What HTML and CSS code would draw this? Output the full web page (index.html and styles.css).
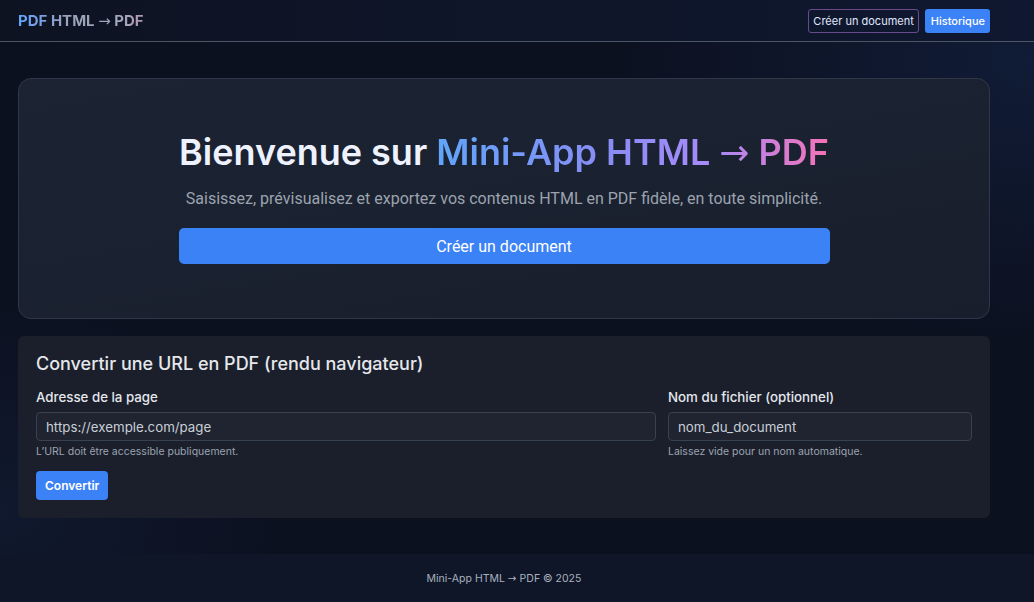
FILE: index.html
```html
<!DOCTYPE html>
<html lang="fr">
<head>
<meta charset="utf-8">
<title>Mini-App HTML → PDF</title>
<link rel="stylesheet" href="styles.css">
</head>
<body>
<header class="topbar">
  <div class="container topbar-inner">
    <a class="brand" href="#">PDF HTML <span class="arr">→</span> PDF</a>
    <nav class="nav">
      <a class="btn-outline" href="#">Créer un document</a>
      <a class="btn-small" href="#">Historique</a>
    </nav>
  </div>
</header>
<main class="container main">
  <section class="hero">
    <div class="hero-inner">
      <h1 class="hero-title">Bienvenue sur <span class="grad">Mini-App HTML <span class="arr">→</span> PDF</span></h1>
      <p class="hero-sub">Saisissez, prévisualisez et exportez vos contenus HTML en PDF fidèle, en toute simplicité.</p>
      <a class="btn-big" href="#">Créer un document</a>
    </div>
  </section>
  <section class="card">
    <h2 class="card-title">Convertir une URL en PDF (rendu navigateur)</h2>
    <div class="form-grid">
      <div class="field">
        <label class="label">Adresse de la page</label>
        <div class="input">https://exemple.com/page</div>
        <div class="help">L’URL doit être accessible publiquement.</div>
      </div>
      <div class="field">
        <label class="label">Nom du fichier (optionnel)</label>
        <div class="input">nom_du_document</div>
        <div class="help">Laissez vide pour un nom automatique.</div>
      </div>
    </div>
    <button class="btn-convert">Convertir</button>
  </section>
</main>
<footer class="footer">
  <div class="container footer-inner"><p class="footer-text">Mini-App HTML <span class="arr">→</span> PDF © 2025</p></div>
</footer>
</body>
</html>
```
FILE: styles.css
```css
* { box-sizing: border-box; }
html, body { margin: 0; padding: 0; }
body {
  font-family: Inter, "Liberation Sans", sans-serif;
  color: #e5e7eb;
  background:
    radial-gradient(ellipse 600px 400px at 100% 10%, rgba(20, 36, 72, 0.55), transparent 70%),
    radial-gradient(ellipse 400px 300px at 0% 85%, rgba(20, 32, 60, 0.5), transparent 70%),
    #0c1120;
  min-height: 602px;
  display: flex;
  flex-direction: column;
}
.container { width: 972px; margin-left: 18px; }
.arr { font-family: "DejaVu Sans", sans-serif; font-weight: 400; }
.topbar {
  border-bottom: 1px solid #4b5563;
  background: linear-gradient(90deg, #0e1322 0%, #0f1830 100%);
}
.topbar-inner {
  height: 41px;
  display: flex;
  align-items: center;
  justify-content: space-between;
}
.brand {
  font-size: 15px;
  font-weight: 700;
  text-decoration: none;
  background: linear-gradient(90deg, #60a5fa 0%, #7d9ee0 20%, #9aa3b8 40%, #a3a8bb 80%, #b197ad 100%);
  -webkit-background-clip: text;
  background-clip: text;
  color: transparent;
}
.nav { display: flex; gap: 6px; align-items: center; }
.btn-outline {
  font-size: 11px;
  color: #e0e7ff;
  text-decoration: none;
  border: 1px solid #6b4a8c;
  border-radius: 3px;
  height: 24px;
  padding: 0 4px;
  display: flex;
  align-items: center;
}
.btn-small {
  font-size: 11px;
  color: #fff;
  font-weight: 500;
  text-decoration: none;
  background: #3b82f6;
  border-radius: 3px;
  height: 24px;
  padding: 0 5px 0 6px;
  display: flex;
  align-items: center;
}
.main { padding-top: 36px; padding-bottom: 36px; flex: 1; }
.hero {
  border: 1px solid #2f3748;
  border-radius: 13px;
  background: linear-gradient(170deg, #1c2434 0%, #181e2b 100%);
  padding: 51px 0 54px;
  display: flex;
  justify-content: center;
}
.hero-inner { width: 651px; text-align: center; }
.hero-title {
  margin: 0;
  font-size: 36px;
  font-weight: 600;
  line-height: 44px;
  color: #eef2ff;
  white-space: nowrap;
  letter-spacing: 0;
}
.grad {
  background: linear-gradient(90deg, #60a5fa 0%, #8b8cf6 45%, #a78bfa 70%, #f472b6 100%);
  -webkit-background-clip: text;
  background-clip: text;
  color: transparent;
}
.hero-sub {
  margin: 13px 0 18px;
  font-family: Roboto, sans-serif;
  font-size: 16px;
  line-height: 22px;
  color: #9ca3af;
}
.btn-big {
  display: flex;
  align-items: center;
  justify-content: center;
  height: 36px;
  border-radius: 5px;
  background: #3b82f6;
  color: #fff;
  text-decoration: none;
  font-family: Roboto, sans-serif;
  font-size: 16px;
  font-weight: 400;
}
.card {
  margin-top: 17px;
  background: #1a1f2b;
  border-radius: 6px;
  padding: 16px 18px 18px;
}
.card-title {
  margin: 0 0 13px;
  font-size: 18px;
  font-weight: 500;
  line-height: 24px;
  color: #e5e7eb;
}
.form-grid {
  display: grid;
  grid-template-columns: calc((100% + 12px) * 2 / 3 - 12px) 1fr;
  gap: 12px;
}
.field { display: flex; flex-direction: column; }
.label {
  font-size: 13.3px;
  font-weight: 500;
  color: #e5e7eb;
  line-height: 16px;
  margin-bottom: 7px;
}
.input {
  height: 29px;
  border: 1px solid #374151;
  border-radius: 4px;
  background: #1f2430;
  color: #c9ced6;
  font-size: 13.3px;
  padding: 0 9px;
  display: flex;
  align-items: center;
}
.help {
  margin-top: 4px;
  font-size: 10.5px;
  color: #9ca3af;
  line-height: 14px;
}
.btn-convert {
  margin-top: 12px;
  height: 29px;
  padding: 0 9px;
  border: none;
  border-radius: 4px;
  background: #3b82f6;
  color: #fff;
  font-family: Inter, sans-serif;
  font-size: 12px;
  font-weight: 600;
}
.footer {
  height: 48px;
  background: #0e1628;
}
.footer-inner {
  height: 48px;
  display: flex;
  align-items: center;
  justify-content: center;
}
.footer-text {
  margin: 0;
  font-size: 10.5px;
  color: #aab1bd;
}
```
